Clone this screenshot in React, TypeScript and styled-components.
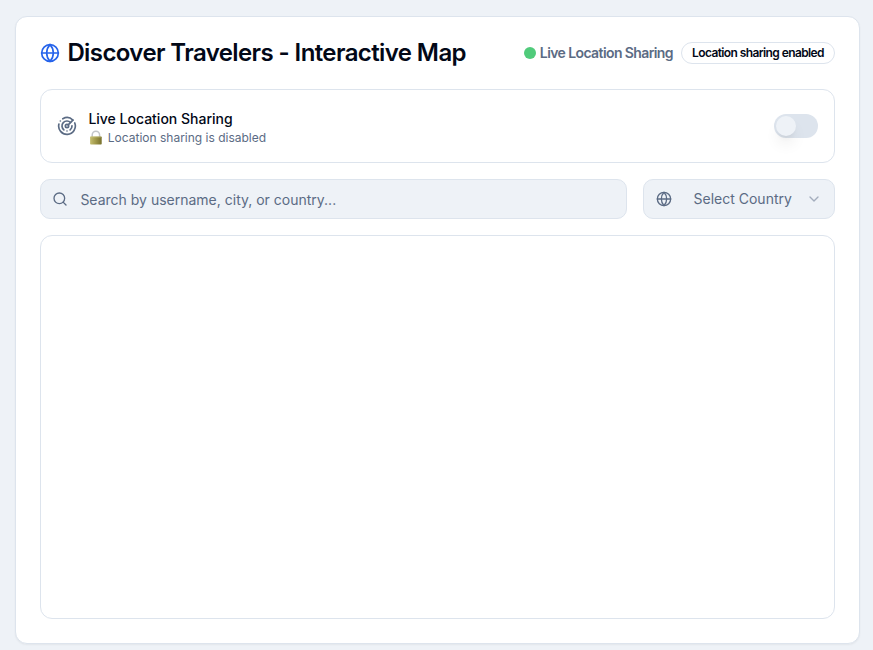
import React from "react";
import styled, { createGlobalStyle } from "styled-components";
import { ChevronDown, Globe, Radar, Search } from "lucide-react";

const GlobalStyle = createGlobalStyle`
  *, *::before, *::after { box-sizing: border-box; }
  body {
    margin: 0;
    background: #eef2f7;
    color: #020817;
    font-family: Inter, "Liberation Sans", sans-serif;
    -webkit-font-smoothing: antialiased;
  }
  button, input { font: inherit; }
`;

const Page = styled.main`
  height: 650px;
  padding: 16px 13px 6px 15px;
  overflow: hidden;
`;

const Card = styled.section`
  display: flex;
  flex-direction: column;
  height: 628px;
  padding: 20px 24px 24px;
  background: #fff;
  border: 1px solid #dde4ed;
  border-radius: 12px;
  box-shadow: 0 1px 2px rgba(0, 0, 0, 0.05);
`;

const Header = styled.header`
  display: flex;
  align-items: center;
  justify-content: space-between;
  height: 32px;
  margin-bottom: 20px;
  letter-spacing: -0.6px;
  white-space: nowrap;
`;

const Title = styled.h1`
  display: flex;
  align-items: center;
  gap: 7.4px;
  margin: 0;
  font-size: 24px;
  line-height: 32px;
  font-weight: 600;

  svg { color: #2563eb; }
`;

const Status = styled.div`
  display: flex;
  align-items: center;
  gap: 8px;
`;

const StatusLabel = styled.span`
  display: flex;
  align-items: center;
  gap: 4px;
  font-size: 14px;
  line-height: 20px;
  font-weight: 600;
  color: #5b6b84;
`;

const Dot = styled.i`
  width: 12px;
  height: 12px;
  border-radius: 50%;
  background: #50cb7b;
`;

const Badge = styled.span`
  padding: 2px 10px;
  border: 1px solid #dde4ed;
  border-radius: 999px;
  font-size: 12px;
  line-height: 16px;
  font-weight: 600;
`;

const Panel = styled.div`
  display: flex;
  align-items: center;
  justify-content: space-between;
  flex: none;
  height: 74px;
  padding: 0 16px;
  border: 1px solid #dde4ed;
  border-radius: 12px;
`;

const PanelInfo = styled.div`
  display: flex;
  align-items: center;
  gap: 11.4px;

  > svg { color: #5b6b84; }
`;

const PanelTitle = styled.div`
  margin: 2px 0 1px;
  font-size: 14px;
  line-height: 20px;
  font-weight: 500;
`;

const PanelNote = styled.div`
  display: flex;
  align-items: center;
  gap: 3.4px;
  font-size: 12px;
  line-height: 16px;
  color: #5b6b84;
`;

const Switch = styled.button`
  display: flex;
  align-items: center;
  width: 44px;
  height: 24px;
  padding: 2px;
  border: 0;
  border-radius: 12px;
  background: #dde4ed;
`;

const Thumb = styled.span`
  width: 20px;
  height: 20px;
  border-radius: 50%;
  background: #eef2f7;
  box-shadow: 0 10px 15px -3px rgba(0, 0, 0, 0.1), 0 4px 6px -4px rgba(0, 0, 0, 0.1);
`;

const Filters = styled.div`
  display: grid;
  grid-template-columns: 1fr 192px;
  gap: 16px;
  margin: 16px 0;
`;

const Field = styled.div`
  display: flex;
  align-items: center;
  height: 40px;
  padding: 0 12px;
  background: #eef2f7;
  border: 1px solid #dde4ed;
  border-radius: 10px;
  font-size: 14px;
  color: #5b6b84;
`;

const SearchField = styled(Field)`
  padding-left: 11px;
`;

const SearchInput = styled.input`
  flex: 1;
  height: 20px;
  margin: 0 0 0 12.4px;
  padding: 0;
  border: 0;
  outline: 0;
  background: transparent;

  &::placeholder { color: #5b6b84; opacity: 1; }
`;

const Country = styled.span`
  flex: 1;
  text-align: center;
  padding: 0 0 2px 7.4px;
`;

const Chevron = styled(ChevronDown)`
  opacity: 0.5;
`;

const MapArea = styled.div`
  flex: 1;
  border: 1px solid #dde4ed;
  border-radius: 12px;
`;

function Lock() {
  return (
    <svg width="16" height="16" viewBox="0 0 16 16" aria-hidden="true">
      <defs>
        <linearGradient id="lock-body" x1="0" x2="1">
          <stop offset="0" stopColor="#c4bd70" />
          <stop offset="0.45" stopColor="#a39b4c" />
          <stop offset="1" stopColor="#77702c" />
        </linearGradient>
      </defs>
      <path d="M4.2 7.5V5a3.7 3.7 0 0 1 7.4 0v2.5" fill="none" stroke="#c3c6c9" strokeWidth="1.5" />
      <rect x="2.1" y="6.4" width="11.6" height="8.1" rx="0.8" fill="url(#lock-body)" />
      <path d="M2.5 6.9h10.8" stroke="#d4ce8c" strokeWidth="0.6" />
    </svg>
  );
}

export default function App() {
  return (
    <>
      <GlobalStyle />
      <Page>
        <Card>
          <Header>
            <Title><Globe size={20} />Discover Travelers - Interactive Map</Title>
            <Status>
              <StatusLabel><Dot />Live Location Sharing</StatusLabel>
              <Badge>Location sharing enabled</Badge>
            </Status>
          </Header>
          <Panel>
            <PanelInfo>
              <Radar size={20} />
              <div>
                <PanelTitle>Live Location Sharing</PanelTitle>
                <PanelNote><Lock />Location sharing is disabled</PanelNote>
              </div>
            </PanelInfo>
            <Switch role="switch" aria-checked={false} aria-label="Live Location Sharing"><Thumb /></Switch>
          </Panel>
          <Filters>
            <SearchField><Search size={16} /><SearchInput placeholder="Search by username, city, or country..." /></SearchField>
            <Field><Globe size={16} /><Country>Select Country</Country><Chevron size={16} /></Field>
          </Filters>
          <MapArea />
        </Card>
      </Page>
    </>
  );
}
